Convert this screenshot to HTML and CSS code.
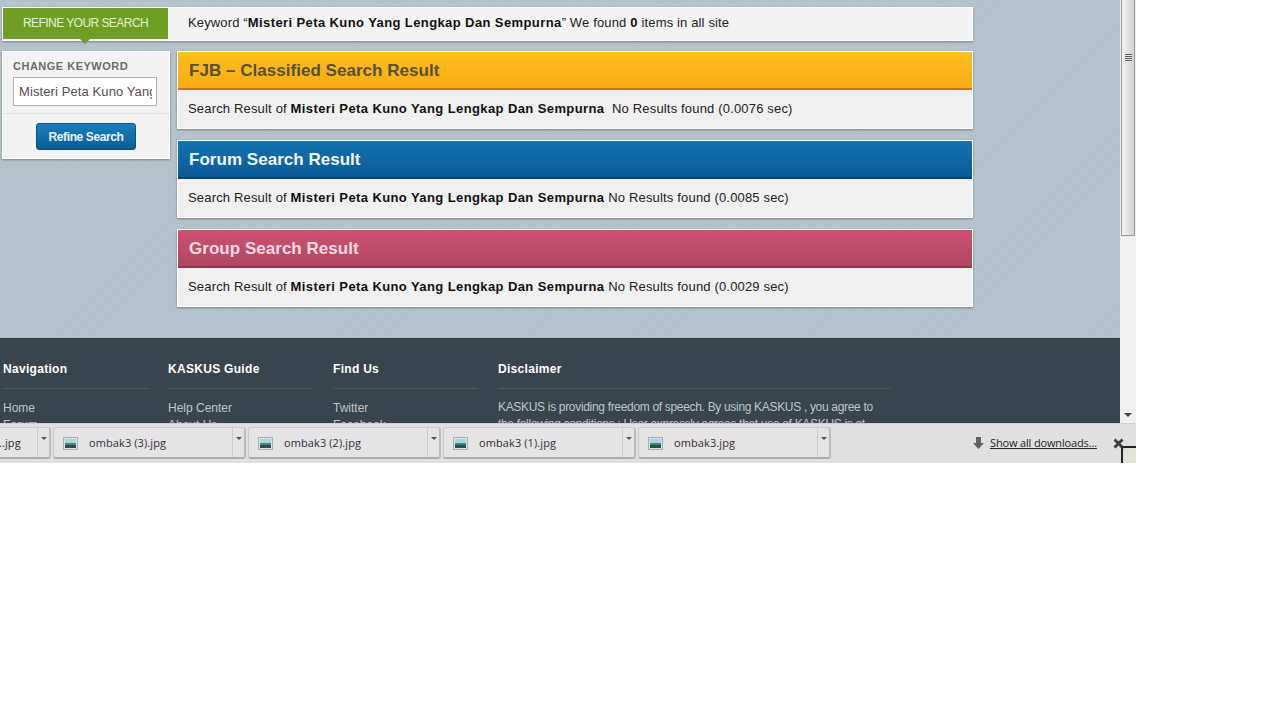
FILE: index.html
```html
<!DOCTYPE html>
<html lang="id">
<head>
  <meta charset="UTF-8">
  <meta name="viewport" content="width=device-width, initial-scale=1.0">
  <title>Search Result</title>
  <link rel="stylesheet" href="styles.css">
</head>
<body>

  <div class="window">
    <div class="viewport">
      <div class="page">
        <!-- Content -->
        <div class="search-area">
          <div class="top-bar">
            <div class="refine-tab"><span>REFINE YOUR SEARCH</span></div>
            <div class="keyword-line">Keyword &ldquo;<b>Misteri Peta Kuno Yang Lengkap Dan Sempurna</b>&rdquo; We found <b>0</b> items in all site</div>
          </div>
          <div class="columns">
            <div class="sidebar">
              <div class="sidebar-top">
                <h4>CHANGE KEYWORD</h4>
                <input class="keyword-input" type="text" value="Misteri Peta Kuno Yang Lengkap Dan Sempurna">
              </div>
              <div class="sidebar-bottom">
                <button class="refine-btn">Refine Search</button>
              </div>
            </div>
            <div class="results">
              <div class="result-box">
                <h3 class="result-title fjb">FJB &ndash; Classified Search Result</h3>
                <p class="result-text">Search Result of <b>Misteri Peta Kuno Yang Lengkap Dan Sempurna</b>&nbsp; No Results found (0.0076 sec)</p>
              </div>
              <div class="result-box">
                <h3 class="result-title forum">Forum Search Result</h3>
                <p class="result-text">Search Result of <b>Misteri Peta Kuno Yang Lengkap Dan Sempurna</b> No Results found (0.0085 sec)</p>
              </div>
              <div class="result-box">
                <h3 class="result-title group">Group Search Result</h3>
                <p class="result-text">Search Result of <b>Misteri Peta Kuno Yang Lengkap Dan Sempurna</b> No Results found (0.0029 sec)</p>
              </div>
            </div>
          </div>
        </div>

        <!-- Footer -->
        <div class="footer">
          <div class="footer-col nav-col">
            <h5>Navigation</h5>
            <a href="#">Home</a>
            <a href="#">Forum</a>
          </div>
          <div class="footer-col guide-col">
            <h5>KASKUS Guide</h5>
            <a href="#">Help Center</a>
            <a href="#">About Us</a>
          </div>
          <div class="footer-col find-col">
            <h5>Find Us</h5>
            <a href="#">Twitter</a>
            <a href="#">Facebook</a>
          </div>
          <div class="footer-col disclaimer-col">
            <h5>Disclaimer</h5>
            <p>KASKUS is providing freedom of speech. By using KASKUS , you agree to the following conditions ; User expressly agrees that use of KASKUS is at</p>
          </div>
        </div>
      </div>

      <!-- Scrollbar -->
      <div class="scrollbar">
        <div class="scroll-thumb">
          <div class="scroll-grip"></div>
        </div>
        <svg class="scroll-arrow" width="8" height="5" viewBox="0 0 8 5"><path d="M0 0h8L4 4z" fill="#444"/></svg>
      </div>
    </div>

    <!-- Download bar -->
    <div class="download-bar">
      <div class="download-item first-item">
        <span class="file-name">..jpg</span>
        <span class="drop-btn"><svg width="6" height="3" viewBox="0 0 6 3"><path d="M0 0h6L3 3z" fill="#555"/></svg></span>
      </div>
      <div class="download-item">
        <svg class="file-icon" width="15" height="13" viewBox="0 0 15 13"><rect x=".5" y=".5" width="14" height="12" fill="#dfe4e6" stroke="#a4adb2"/><rect x="2" y="2" width="11" height="4" fill="#a9d3e8"/><rect x="2" y="6" width="11" height="2" fill="#3f8a68"/><rect x="2" y="8" width="11" height="3" fill="#2d4a5e"/></svg>
        <span class="file-name">ombak3 (3).jpg</span>
        <span class="drop-btn"><svg width="6" height="3" viewBox="0 0 6 3"><path d="M0 0h6L3 3z" fill="#555"/></svg></span>
      </div>
      <div class="download-item">
        <svg class="file-icon" width="15" height="13" viewBox="0 0 15 13"><rect x=".5" y=".5" width="14" height="12" fill="#dfe4e6" stroke="#a4adb2"/><rect x="2" y="2" width="11" height="4" fill="#a9d3e8"/><rect x="2" y="6" width="11" height="2" fill="#3f8a68"/><rect x="2" y="8" width="11" height="3" fill="#2d4a5e"/></svg>
        <span class="file-name">ombak3 (2).jpg</span>
        <span class="drop-btn"><svg width="6" height="3" viewBox="0 0 6 3"><path d="M0 0h6L3 3z" fill="#555"/></svg></span>
      </div>
      <div class="download-item">
        <svg class="file-icon" width="15" height="13" viewBox="0 0 15 13"><rect x=".5" y=".5" width="14" height="12" fill="#dfe4e6" stroke="#a4adb2"/><rect x="2" y="2" width="11" height="4" fill="#a9d3e8"/><rect x="2" y="6" width="11" height="2" fill="#3f8a68"/><rect x="2" y="8" width="11" height="3" fill="#2d4a5e"/></svg>
        <span class="file-name">ombak3 (1).jpg</span>
        <span class="drop-btn"><svg width="6" height="3" viewBox="0 0 6 3"><path d="M0 0h6L3 3z" fill="#555"/></svg></span>
      </div>
      <div class="download-item">
        <svg class="file-icon" width="15" height="13" viewBox="0 0 15 13"><rect x=".5" y=".5" width="14" height="12" fill="#dfe4e6" stroke="#a4adb2"/><rect x="2" y="2" width="11" height="4" fill="#a9d3e8"/><rect x="2" y="6" width="11" height="2" fill="#3f8a68"/><rect x="2" y="8" width="11" height="3" fill="#2d4a5e"/></svg>
        <span class="file-name">ombak3.jpg</span>
        <span class="drop-btn"><svg width="6" height="3" viewBox="0 0 6 3"><path d="M0 0h6L3 3z" fill="#555"/></svg></span>
      </div>
      <div class="show-all">
        <svg width="11" height="12" viewBox="0 0 11 12"><path d="M3 0h5v6h3l-5.500 6L0 6h3z" fill="#606060"/></svg>
        <a href="#">Show all downloads...</a>
      </div>
      <svg class="close-x" width="11" height="11" viewBox="0 0 11 11"><path d="M1.500 1.500l8 8M9.500 1.500l-8 8" stroke="#3a3a3a" stroke-width="2.800"/></svg>
      <div class="resize-corner"></div>
    </div>
  </div>

</body>
</html>
```

FILE: styles.css
```css
* {
  margin: 0;
  padding: 0;
  box-sizing: border-box;
}

body {
  font-family: 'Liberation Sans', Arial, sans-serif;
  background-color: #fff;
}

.window {
  width: 1136px;
  height: 463px;
  overflow: hidden;
  position: relative;
}

.viewport {
  display: flex;
  height: 423px;
}

.page {
  width: 1120px;
  height: 423px;
  overflow: hidden;
  background-color: #b5c3cc;
  background-image: repeating-linear-gradient(135deg, rgba(255, 255, 255, 0.02) 0, rgba(255, 255, 255, 0.02) 1px, rgba(0, 0, 0, 0.01) 1px, rgba(0, 0, 0, 0.01) 3px);
}

/* Top bar */
.search-area {
  height: 338px;
  padding: 7px 0 0 2px;
}

.top-bar {
  display: flex;
  align-items: flex-start;
  width: 971px;
  height: 34px;
  background-color: #f3f3f3;
  border: 1px solid #fff;
  box-shadow: 0 1px 2px rgba(0, 0, 0, 0.35);
}

.refine-tab {
  width: 165px;
  height: 31px;
  background-color: #6e9f24;
  color: #e6f0d4;
  font-size: 12px;
  letter-spacing: -0.55px;
  line-height: 31px;
  text-align: center;
  position: relative;
}

.refine-tab::after {
  content: '';
  position: absolute;
  left: 77px;
  top: 31px;
  border-left: 5px solid transparent;
  border-right: 5px solid transparent;
  border-top: 5px solid #6e9f24;
}

.keyword-line {
  margin-left: 20px;
  font-size: 13px;
  line-height: 29px;
  letter-spacing: 0.14px;
  color: #222;
}

.keyword-line b {
  color: #111;
  letter-spacing: 0.4px;
}

.columns {
  display: flex;
  gap: 7px;
  margin-top: 10px;
}

/* Sidebar */
.sidebar {
  width: 168px;
  height: 108px;
  background-color: #f3f3f3;
  border: 1px solid #fff;
  box-shadow: 0 1px 2px rgba(0, 0, 0, 0.35);
}

.sidebar-top {
  height: 62px;
  padding: 8px 11px 0 10px;
  border-bottom: 1px solid #e2e2e2;
}

.sidebar-top h4 {
  font-size: 11px;
  line-height: 13px;
  letter-spacing: 0.5px;
  color: #6b6b6b;
  margin-bottom: 4px;
}

.keyword-input {
  display: block;
  width: 144px;
  height: 29px;
  padding: 0 4px 0 5px;
  border: 1px solid #b0b0b0;
  background-color: #fff;
  font-family: 'Liberation Sans', Arial, sans-serif;
  font-size: 13px;
  letter-spacing: 0.1px;
  color: #5a4a5a;
}

.sidebar-bottom {
  display: flex;
  justify-content: center;
  padding-top: 9px;
}

.refine-btn {
  width: 100px;
  height: 27px;
  border: 1px solid #0d4f7f;
  border-radius: 3px;
  background: linear-gradient(#1a80c0, #0b5c95);
  color: #eaf4fb;
  font-family: 'Liberation Sans', Arial, sans-serif;
  font-size: 12px;
  letter-spacing: -0.4px;
  font-weight: bold;
}

/* Results */
.results {
  display: flex;
  flex-direction: column;
  gap: 11px;
}

.result-box {
  width: 796px;
  height: 78px;
  background-color: #f0f0f0;
  border: 1px solid #fff;
  box-shadow: 0 1px 2px rgba(0, 0, 0, 0.35);
}

.result-title {
  height: 38px;
  padding-left: 11px;
  font-size: 17px;
  letter-spacing: 0.03px;
  line-height: 37px;
}

.result-title.fjb {
  background: linear-gradient(#ffc01e, #f8ab12);
  border-bottom: 2px solid #c8741c;
  color: #57503a;
}

.result-title.forum {
  background: linear-gradient(#1273b2, #0b5a94);
  border-bottom: 2px solid #07426f;
  color: #f3f8fb;
}

.result-title.group {
  background: linear-gradient(#cf5273, #ae4662);
  border-bottom: 2px solid #94344e;
  color: #f3dbe3;
}

.result-text {
  padding: 10px 0 0 10px;
  font-size: 13px;
  line-height: 17px;
  letter-spacing: 0.17px;
  color: #222;
}

.result-text b {
  color: #111;
  letter-spacing: 0.4px;
}

/* Footer */
.footer {
  display: flex;
  height: 85px;
  overflow: hidden;
  padding: 23px 0 0 3px;
  background-color: #37454e;
  border-top: 1px solid #303c44;
}

.footer-col h5 {
  height: 27px;
  font-size: 12px;
  letter-spacing: 0.3px;
  line-height: 15px;
  color: #fff;
  border-bottom: 1px solid #4b5960;
  margin-bottom: 11px;
}

.footer-col a {
  display: block;
  font-size: 12px;
  line-height: 17px;
  color: #bfc6ca;
  text-decoration: none;
}

.footer-col p {
  margin-top: -1px;
  font-size: 12px;
  letter-spacing: -0.32px;
  line-height: 17px;
  color: #bfc6ca;
}

.nav-col {
  width: 145px;
  margin-right: 20px;
}

.guide-col {
  width: 145px;
  margin-right: 20px;
}

.find-col {
  width: 145px;
  margin-right: 20px;
}

.disclaimer-col {
  width: 392px;
}

/* Scrollbar */
.scrollbar {
  width: 16px;
  height: 423px;
  background-color: #f0f0f0;
  display: flex;
  flex-direction: column;
  align-items: center;
  position: relative;
}

.scroll-thumb {
  width: 14px;
  height: 236px;
  padding-top: 54px;
  background: linear-gradient(to right, #f2f2f2, #d2d2d6);
  border: 1px solid #9a9a9a;
  border-top: none;
  display: flex;
  justify-content: center;
}

.scroll-grip {
  width: 7px;
  height: 8px;
  background: repeating-linear-gradient(#555 0, #555 1px, #eee 1px, #eee 2px);
}

.scroll-arrow {
  position: absolute;
  left: 4px;
  bottom: 5px;
}

/* Download bar */
.download-bar {
  display: flex;
  align-items: flex-start;
  gap: 2px;
  height: 40px;
  padding-top: 3px;
  background-color: #e0e0e0;
  border-top: 1px solid #d0d0d0;
  position: relative;
}

.download-item {
  display: flex;
  align-items: center;
  width: 193px;
  height: 32px;
  padding-left: 9px;
  background-color: #e4e4e4;
  border: 1px solid #c8c8c8;
  border-bottom: 2px solid #adadad;
  border-right: 2px solid #bcbcbc;
  border-radius: 3px;
}

.first-item {
  width: 52px;
  padding-left: 0;
  margin-left: -1px;
  border-left: none;
  border-radius: 0 3px 3px 0;
}

.file-icon {
  margin: 2px 11px 0 0;
}

.file-name {
  flex: 1;
  font-family: 'Open Sans', sans-serif;
  font-size: 11px;
  letter-spacing: 0.1px;
  line-height: 26px;
  color: #3a2a3a;
}

.drop-btn {
  display: flex;
  justify-content: center;
  width: 12px;
  height: 100%;
  padding-top: 9px;
  border-left: 1px solid #cacaca;
}

.drop-btn svg {
  display: block;
}

.show-all {
  display: flex;
  align-items: center;
  gap: 6px;
  position: absolute;
  left: 973px;
  top: 11px;
  font-family: 'Open Sans', sans-serif;
  font-size: 11px;
  letter-spacing: -0.15px;
}

.show-all a {
  color: #222;
}

.close-x {
  position: absolute;
  left: 1113px;
  top: 14px;
}

.resize-corner {
  position: absolute;
  left: 1121px;
  top: 22px;
  width: 15px;
  height: 18px;
  background-color: #dfe3d8;
  border-top: 2px solid #222;
  border-left: 2px solid #222;
  border-top-left-radius: 3px;
}
```
